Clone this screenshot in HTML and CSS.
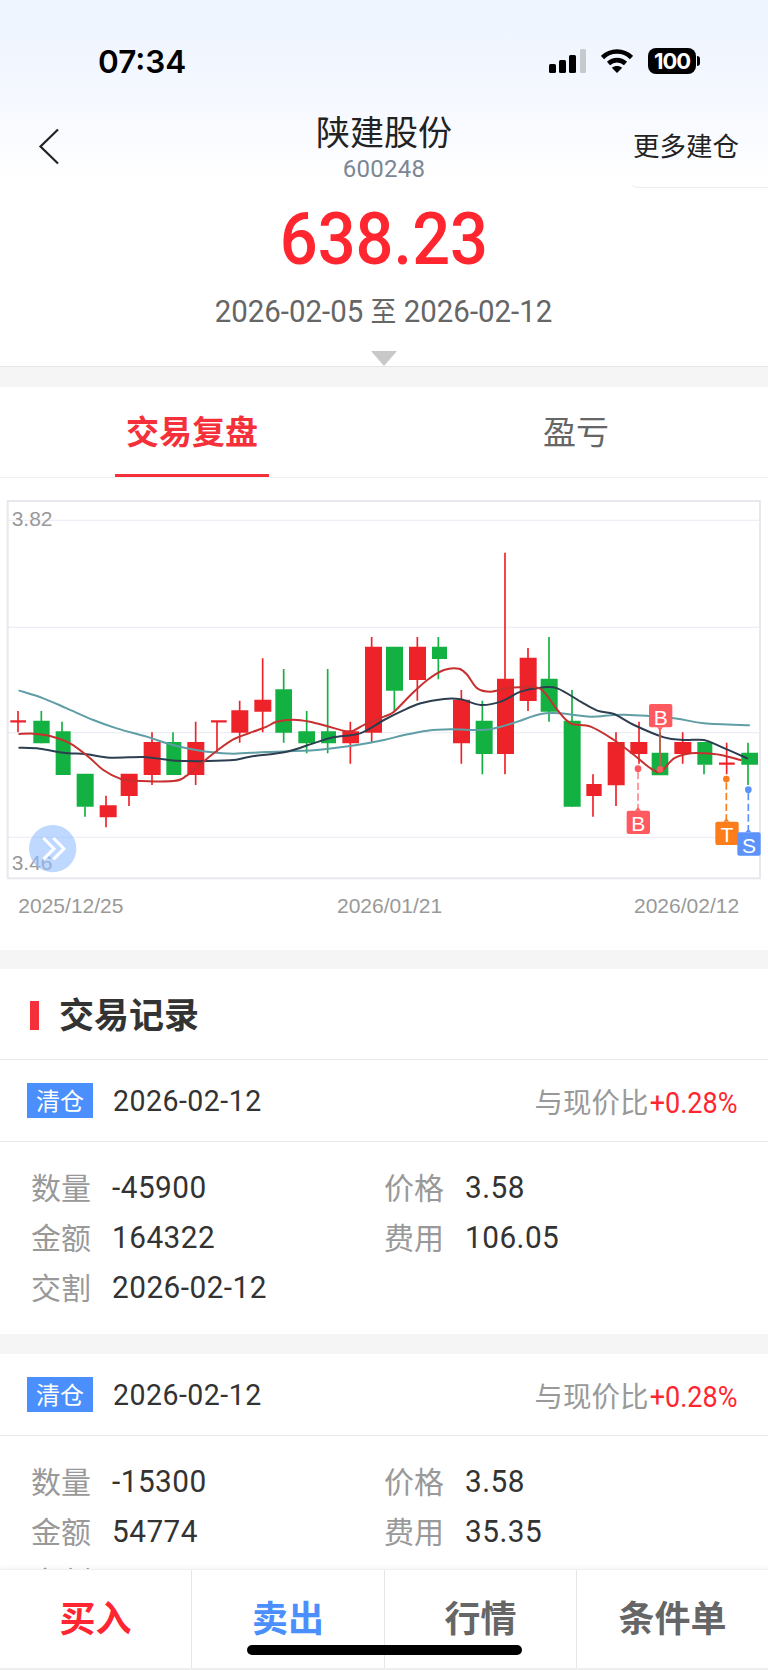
FILE: index.html
```html
<!DOCTYPE html>
<html lang="zh-CN">
<head>
  <meta charset="UTF-8" />
  <meta name="viewport" content="width=device-width, initial-scale=1.0"/>
  <title>陕建股份</title>
  <link rel="stylesheet" href="styles.css">
</head>
<body>
<div class="page">

  <main class="content">
    <header class="hero">
      <div class="status">
        <span class="clock">07:34</span>
        <div class="status-icons">
          <svg class="signal" width="37" height="24" viewBox="0 0 37 24">
            <rect x="0" y="15" width="7" height="9" rx="1.5" fill="#000"/>
            <rect x="10" y="11" width="7" height="13" rx="1.5" fill="#000"/>
            <rect x="20" y="6" width="7" height="18" rx="1.5" fill="#000"/>
            <rect x="31" y="0" width="6" height="24" rx="1.5" fill="#c6c9ce"/>
          </svg>
          <svg class="wifi" width="32" height="24" viewBox="0 0 32 24">
            <path d="M1.500 8.500C9.500 0.500 22.500 0.500 30.500 8.500" fill="none" stroke="#000" stroke-width="4.600"/>
            <path d="M7.500 14.500C12.500 10 19.500 10 24.500 14.500" fill="none" stroke="#000" stroke-width="4.600"/>
            <path d="M16 24L10.800 18.800C14 16.400 18 16.400 21.200 18.800Z" fill="#000"/>
          </svg>
          <div class="battery">100</div>
        </div>
      </div>

      <nav class="nav">
        <div class="back">
          <svg width="22" height="37" viewBox="0 0 22 37">
            <path d="M20 1.500L2.500 18.500L20 35.500" fill="none" stroke="#222" stroke-width="2.200"/>
          </svg>
        </div>
        <div class="title-wrap">
          <div class="title">陕建股份</div>
          <div class="code">600248</div>
        </div>
        <div class="more">更多建仓</div>
      </nav>

      <div class="price">638.23</div>
      <div class="range">2026-02-05 <span class="cjk">至</span> 2026-02-12</div>
      <div class="caret"></div>
    </header>

    <div class="band"></div>

    <div class="tabs">
      <div class="tab active"><span>交易复盘</span></div>
      <div class="tab"><span>盈亏</span></div>
    </div>

    <section class="chart">
      <!-- coordinates are 3x, the crop the candles were read from -->
      <svg class="kline" width="768" height="460" viewBox="0 0 2304 1380">
        <path class="grid-line" d="M24 91H2280M24 412H2280M24 728H2280M24 1042H2280"/>
        <rect class="frame" x="23" y="33" width="2257" height="1132"/>
        <text class="axis-y" x="35" y="108">3.82</text>
        <text class="axis-y" x="35" y="1141">3.46</text>

        <path class="wick-red" d="M54 663V727M318 917V1012M387 918V948M456 727V885M587 695V885M651 694V790M719 632V758M788 505V727M1051 695V821M1115 441V758M1252 441V632M1384 600V821M1515 188V853M1584 474V663M1779 853V980M1848 727V948M1917 695V821M2048 727V821M2180 758V853"/>
        <path class="wick-red thick" d="M31 694H78M633 694H680M2157 821H2204"/>
        <path class="wick-green" d="M124 663V760M186 695V855M255 950V980M519 727V855M851 537V758M920 663V790M983 537V790M1183 602V663M1315 441V568M1447 632V853M1647 441V695M1716 600V950M1980 727V853M2112 824V853M2244 758V885"/>

        <path class="body-red" d="M299 946H350V982H299ZM362 851H413V918H362ZM431 756H482V855H431ZM562 756H613V855H562ZM694 661H745V728H694ZM763 629H814V665H763ZM1027 724H1077V760H1027ZM1095 470H1146V728H1095ZM1227 470H1278V570H1227ZM1359 629H1410V760H1359ZM1491 566H1542V792H1491ZM1559 503H1610V633H1559ZM1759 882H1805V918H1759ZM1823 756H1874V886H1823ZM1891 756H1942V792H1891ZM2023 756H2074V792H2023Z"/>
        <path class="body-green" d="M100 692H149V760H100ZM167 724H212V855H167ZM230 851H281V950H230ZM499 756H544V855H499ZM826 598H876V728H826ZM895 724H945V760H895ZM963 724H1008V760H963ZM1158 470H1209V602H1158ZM1296 470H1341V507H1296ZM1427 692H1478V792H1427ZM1622 566H1673V665H1622ZM1691 692H1742V950H1691ZM1955 788H2005V856H1955ZM2092 756H2137V824H2092ZM2224 788H2274V824H2224Z"/>

        <path class="ma ma-teal" data-points="58,602 130,625 200,655 280,690 350,715 440,740 500,760 560,775 620,785 700,791 800,786 950,780 1070,765 1152,750 1212,735 1282,722 1352,718 1452,720 1502,710 1552,695 1622,672 1682,670 1772,680 1872,674 2022,685 2112,700 2247,706"/>
        <path class="ma ma-dark" data-points="58,773 120,776 190,788 260,793 330,803 430,801 490,808 550,813 690,811 750,800 860,785 940,760 1000,742 1080,730 1152,690 1202,665 1262,640 1332,627 1382,628 1442,645 1502,635 1562,605 1622,593 1672,595 1742,635 1792,662 1842,672 1902,705 1992,742 2052,750 2112,750 2162,770 2242,805"/>
        <path class="ma ma-red" data-points="58,732 100,731 150,738 210,760 265,800 310,840 360,866 400,872 520,873 560,857 610,815 650,783 700,748 760,725 800,710 830,695 880,689 930,695 980,708 1030,722 1060,722 1095,703 1152,680 1182,665 1232,615 1282,570 1332,540 1377,536 1402,555 1432,595 1472,605 1522,595 1562,592 1622,597 1672,660 1712,700 1772,710 1842,750 1902,795 1952,835 1982,845 2022,805 2072,790 2112,790 2162,795 2222,810"/>

        <path class="dash dash-red" d="M1914 846V960"/>
        <path class="dash dash-orange" d="M2179 877V990"/>
        <path class="dash dash-blue" d="M2245 909V1022"/>
        <path class="stem-red" d="M1980 718V828"/>
        <circle class="dot-red" cx="1914" cy="836" r="10"/>
        <circle class="dot-red" cx="1980" cy="838" r="10"/>
        <circle class="dot-orange" cx="2179" cy="867" r="10"/>
        <circle class="dot-blue" cx="2245" cy="899" r="10"/>

        <g class="mark-red">
          <path d="M1971 712H1989L1980 722Z"/>
          <rect x="1947" y="642" width="70" height="70" rx="6"/>
          <path d="M1905 962H1923L1914 952Z"/>
          <rect x="1880" y="962" width="70" height="70" rx="6"/>
        </g>
        <g class="mark-orange">
          <path d="M2170 995H2188L2179 985Z"/>
          <rect x="2146" y="995" width="70" height="70" rx="6"/>
        </g>
        <g class="mark-blue">
          <path d="M2236 1027H2254L2245 1017Z"/>
          <rect x="2212" y="1027" width="70" height="70" rx="6"/>
        </g>
        <text class="mark-text" x="1982" y="704">B</text>
        <text class="mark-text" x="1915" y="1024">B</text>
        <text class="mark-text" x="2181" y="1056">T</text>
        <text class="mark-text" x="2247" y="1088">S</text>

        <circle class="expand" cx="158" cy="1076" r="71"/>
        <path class="expand-arrow" d="M130 1044L162 1076L130 1108M160 1044L192 1076L160 1108"/>

        <text class="axis-x" x="55" y="1268">2025/12/25</text>
        <text class="axis-x" x="1011" y="1268">2026/01/21</text>
        <text class="axis-x" x="1902" y="1268">2026/02/12</text>
      </svg>
    </section>

    <div class="band band-flat"></div>

    <h2 class="sec-title">交易记录</h2>

    <article class="rec">
      <div class="rec-head">
        <span class="tag">清仓</span>
        <span class="rec-date">2026-02-12</span>
        <span class="rec-cmp">与现价比<em>+0.28%</em></span>
      </div>
      <div class="rec-body">
        <div class="cell"><label>数量</label><b>-45900</b></div>
        <div class="cell"><label>价格</label><b>3.58</b></div>
        <div class="cell"><label>金额</label><b>164322</b></div>
        <div class="cell"><label>费用</label><b>106.05</b></div>
        <div class="cell"><label>交割</label><b>2026-02-12</b></div>
      </div>
    </article>

    <div class="band"></div>

    <article class="rec">
      <div class="rec-head">
        <span class="tag">清仓</span>
        <span class="rec-date">2026-02-12</span>
        <span class="rec-cmp">与现价比<em>+0.28%</em></span>
      </div>
      <div class="rec-body">
        <div class="cell"><label>数量</label><b>-15300</b></div>
        <div class="cell"><label>价格</label><b>3.58</b></div>
        <div class="cell"><label>金额</label><b>54774</b></div>
        <div class="cell"><label>费用</label><b>35.35</b></div>
        <div class="cell"><label>交割</label><b>2026-02-12</b></div>
      </div>
    </article>
  </main>

  <footer class="actions">
    <div class="act act-buy">买入</div>
    <div class="act act-sell">卖出</div>
    <div class="act">行情</div>
    <div class="act">条件单</div>
    <div class="home-bar"></div>
  </footer>

</div>
<script src="chart.js"></script>
</body>
</html>
```

FILE: styles.css
```css
* {
  box-sizing: border-box;
}

body {
  margin: 0;
  background-color: #fff;
  font-family: "Noto Sans CJK SC", "Liberation Sans", sans-serif;
}

.page {
  width: 768px;
  height: 1670px;
  overflow: hidden;
  background-color: #fff;
}

.content {
  height: 1569px;
  overflow: hidden;
}

/* no DIN here, so Roboto squeezed a little */
.code, .price, .range, .rec-date, .rec-cmp em, .cell b {
  display: inline-block;
  font-family: "Roboto", "Noto Sans CJK SC", sans-serif;
}

.hero {
  height: 367px;
  background: linear-gradient(#edf4fe 0, #f5f8ff 100px, #fff 180px);
  border-bottom: 1px solid #e6e6e6;
  display: flex;
  flex-direction: column;
  align-items: center;
  padding-top: 44px;
}

.status {
  width: 100%;
  height: 34px;
  display: flex;
  align-items: center;
  justify-content: space-between;
  padding: 0 72px 0 98px;
}

.clock {
  font-family: "Inter", sans-serif;
  font-weight: 600;
  font-size: 31.500px;
  color: #000;
}

.status-icons {
  display: flex;
  align-items: center;
  gap: 15px;
}

.battery {
  position: relative;
  width: 48px;
  height: 26px;
  border-radius: 8px;
  background-color: #000;
  color: #fff;
  font-family: "Inter", sans-serif;
  font-weight: 700;
  font-size: 22px;
  letter-spacing: -1px;
  line-height: 26px;
  text-align: center;
}

.battery::after {
  content: "";
  position: absolute;
  right: -4px;
  top: 8px;
  width: 3px;
  height: 10px;
  border-radius: 0 3px 3px 0;
  background-color: #000;
}

.nav {
  width: 100%;
  height: 76px;
  margin-top: 34px;
  display: grid;
  grid-template-columns: 138px 1fr 138px;
}

.back {
  padding: 16px 0 0 38px;
}

.title-wrap {
  text-align: center;
}

.title {
  margin-top: -2px;
  font-size: 34px;
  line-height: 42px;
  color: #222;
}

.code {
  font-size: 24px;
  line-height: 24px;
  margin-top: 5px;
  letter-spacing: 0.3px;
  color: #7b8794;
}

.more {
  font-size: 26.500px;
  line-height: 36px;
  padding: 15px 0 0 3px;
  color: #222;
  border-bottom: 1px solid #ececec;
  border-bottom-left-radius: 8px;
}

.price {
  margin-top: 15px;
  font-size: 73px;
  line-height: 72px;
  font-weight: 500;
  color: #ff2630;
  transform: scaleX(0.915);
}

.range {
  margin-top: 17px;
  font-size: 32px;
  line-height: 36px;
  color: #666;
  transform: scaleX(0.92);
}

.range .cjk {
  font-family: "Noto Sans CJK SC", sans-serif;
  font-size: 28px;
}

.caret {
  margin-top: 22px;
  width: 0;
  height: 0;
  border-left: 13px solid transparent;
  border-right: 13px solid transparent;
  border-top: 15px solid #c8c8c8;
}

.band {
  height: 20px;
  background-color: #f5f5f5;
}

.band-flat {
  height: 19px;
}

.tabs {
  height: 91px;
  display: flex;
  border-bottom: 1px solid #f0f0f0;
}

.tab {
  flex: 1;
  display: flex;
  justify-content: center;
  font-size: 33px;
  line-height: 86px;
  color: #666;
}

.tab span {
  height: 90px;
  padding: 0 11px;
}

.tab.active {
  color: #f5303a;
  font-weight: 700;
}

.tab.active span {
  border-bottom: 3px solid #f5303a;
}

.chart {
  height: 472px;
  padding-top: 12px;
}

.kline {
  display: block;
}

.grid-line {
  fill: none;
  stroke: #eeeef6;
  stroke-width: 4;
}

.frame {
  fill: none;
  stroke: #e8e8ee;
  stroke-width: 6;
}

.axis-y, .axis-x {
  font-family: "Liberation Sans", sans-serif;
  font-size: 63px;
  fill: #999;
}

.wick-red {
  fill: none;
  stroke: #ee2229;
  stroke-width: 5;
}

.wick-red.thick {
  stroke-width: 7;
}

.wick-green {
  fill: none;
  stroke: #12b142;
  stroke-width: 5;
}

.body-red {
  fill: #ee2229;
}

.body-green {
  fill: #12b142;
}

.ma {
  fill: none;
  stroke-width: 6;
  stroke-linecap: round;
}

.ma-teal {
  stroke: #5f9ea5;
}

.ma-dark {
  stroke: #2c3e50;
}

.ma-red {
  stroke: #c7302f;
}

.dash {
  fill: none;
  stroke-width: 5;
  stroke-dasharray: 22 10;
}

.dash-red {
  stroke: #ff8a8e;
}

.dash-orange {
  stroke: #fb7d1b;
}

.dash-blue {
  stroke: #5b93fb;
}

.stem-red {
  fill: none;
  stroke: #d9564a;
  stroke-width: 5;
}

.dot-red, .mark-red {
  fill: #ff5a5f;
}

.dot-orange, .mark-orange {
  fill: #fb7d1b;
}

.dot-blue, .mark-blue {
  fill: #5b93fb;
}

.mark-text {
  font-family: "Liberation Sans", sans-serif;
  font-size: 63px;
  fill: #fff;
  text-anchor: middle;
}

.expand {
  fill: #93beff;
  fill-opacity: 0.6;
}

.expand-arrow {
  fill: none;
  stroke: #fff;
  stroke-width: 9;
}

.sec-title {
  position: relative;
  margin: 0;
  height: 91px;
  padding-left: 59px;
  font-size: 35px;
  line-height: 87px;
  font-weight: 700;
  color: #333;
  border-bottom: 1px solid #e8e8e8;
}

.sec-title::before {
  content: "";
  position: absolute;
  left: 30px;
  top: 32px;
  width: 9px;
  height: 29px;
  background-color: #f5303a;
}

.rec-head {
  height: 82px;
  display: flex;
  align-items: center;
  padding: 0 31px 0 27px;
  border-bottom: 1px solid #e8e8e8;
}

.tag {
  width: 66px;
  height: 35px;
  background-color: #4a8ffc;
  color: #fff;
  font-size: 24px;
  line-height: 33px;
  text-align: center;
}

.rec-date {
  margin-left: 20px;
  font-size: 30px;
  letter-spacing: 0.5px;
  color: #333;
  transform: scaleX(0.95);
  transform-origin: left center;
}

.rec-cmp {
  margin-left: auto;
  font-size: 28.500px;
  color: #999;
}

.rec-cmp em {
  font-style: normal;
  font-size: 30px;
  color: #ff2630;
  transform: scaleX(0.9);
  transform-origin: right center;
  margin-left: -9px;
}

.rec-body {
  display: grid;
  grid-template-columns: 353px 1fr;
  grid-auto-rows: 50px;
  padding: 20px 0 22px 31px;
}

.cell {
  display: flex;
  align-items: center;
  gap: 21px;
}

.cell label {
  margin-top: -3px;
  font-size: 30px;
  color: #999;
}

.cell b {
  font-weight: 400;
  font-size: 32px;
  letter-spacing: 0.5px;
  color: #333;
  transform: scaleX(0.93);
  transform-origin: left center;
}

.actions {
  position: relative;
  height: 101px;
  display: grid;
  grid-template-columns: 192px 193px 192px 191px;
  background-color: #fff;
  border-top: 1px solid #f0f0f0;
  border-bottom: 2px solid #eee;
  box-shadow: 0 -2px 4px rgba(0,0,0,0.04);
}

.act {
  font-size: 36px;
  font-weight: 700;
  line-height: 92px;
  text-align: center;
  color: #666;
  border-right: 1px solid #e6e6e6;
}

.act:nth-child(4) {
  border-right: none;
}

.act-buy {
  color: #ff2632;
}

.act-sell {
  color: #4a8ffc;
}

.home-bar {
  position: absolute;
  left: 247px;
  top: 75px;
  width: 275px;
  height: 10px;
  border-radius: 5px;
  background-color: #000;
}
```

FILE: chart.js
```js
// turn the moving average points into smooth curves
document.querySelectorAll('.ma').forEach(function(line) {
  const pts = line.dataset.points.split(' ').map(function(p) {
    return p.split(',').map(Number);
  });

  let d = 'M' + pts[0].join(' ');
  for (let i = 0; i < pts.length - 1; i++) {
    const p0 = pts[i - 1] || pts[i];
    const p1 = pts[i];
    const p2 = pts[i + 1];
    const p3 = pts[i + 2] || p2;
    const c1x = p1[0] + (p2[0] - p0[0]) / 6;
    const c1y = p1[1] + (p2[1] - p0[1]) / 6;
    const c2x = p2[0] - (p3[0] - p1[0]) / 6;
    const c2y = p2[1] - (p3[1] - p1[1]) / 6;
    d += 'C' + c1x + ' ' + c1y + ' ' + c2x + ' ' + c2y + ' ' + p2[0] + ' ' + p2[1];
  }
  line.setAttribute('d', d);
});
```
